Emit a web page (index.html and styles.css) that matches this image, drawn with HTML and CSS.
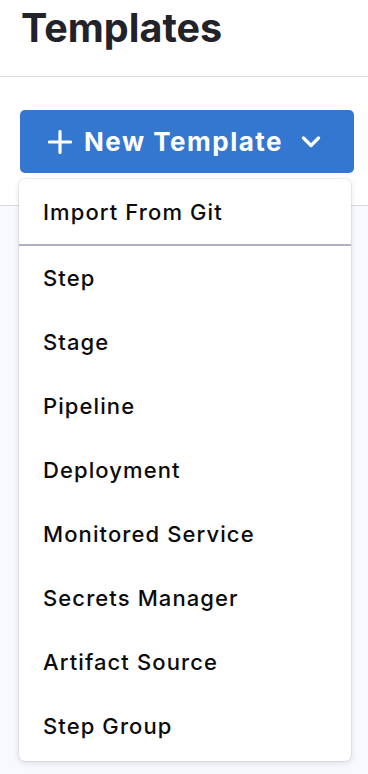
FILE: index.html
```html
<!DOCTYPE html>
<html>
<head>
<meta charset="utf-8">
<link rel="stylesheet" href="styles.css">
</head>
<body>
<header class="page-header">
  <h1 class="title">Templates</h1>
</header>
<section class="toolbar">
  <div class="dropdown">
    <button class="btn-new">
      <svg class="plus" width="24" height="24" viewBox="0 0 24 24"><path d="M12 1.5v21M1.5 12h21" stroke="#fff" stroke-width="3.2" stroke-linecap="round" fill="none"/></svg>
      <span>New Template</span>
      <svg class="chev" width="20" height="12" viewBox="0 0 20 12"><path d="M2.5 2l7.5 7.5L17.5 2" stroke="#fff" stroke-width="3.2" stroke-linecap="round" stroke-linejoin="round" fill="none"/></svg>
    </button>
    <div class="menu">
      <div class="menu-item first">Import From Git</div>
      <div class="sep"></div>
      <div class="menu-item">Step</div>
      <div class="menu-item">Stage</div>
      <div class="menu-item">Pipeline</div>
      <div class="menu-item">Deployment</div>
      <div class="menu-item">Monitored Service</div>
      <div class="menu-item">Secrets Manager</div>
      <div class="menu-item">Artifact Source</div>
      <div class="menu-item">Step Group</div>
    </div>
  </div>
</section>
<main class="content"></main>
</body>
</html>
```
FILE: styles.css
```css
* { box-sizing: border-box; }
html, body { margin: 0; padding: 0; }
body {
  width: 368px;
  height: 774px;
  overflow: hidden;
  background: #f8f9fc;
  font-family: Inter, "Noto Sans", sans-serif;
}
.page-header {
  height: 77px;
  background: #fff;
  border-bottom: 1.5px solid #d9dae6;
  padding: 0 0 0 21px;
}
.title {
  margin: 0;
  font-size: 39.5px;
  font-weight: 700;
  color: #22222a;
  line-height: 56px;
  letter-spacing: 0;
}
.toolbar {
  height: 129px;
  background: #fff;
  border-bottom: 1.5px solid #d9dae6;
  padding: 33px 14px 0 20px;
  position: relative;
}
.dropdown { position: relative; }
.btn-new {
  width: 334px;
  height: 63px;
  background: #3477d0;
  border: none;
  border-radius: 5px;
  color: #fff;
  font-family: Inter, "Noto Sans", sans-serif;
  font-size: 26px;
  font-weight: 700;
  letter-spacing: 1.5px;
  display: flex;
  align-items: center;
  padding: 0 0 0 28px;
  gap: 12px;
}
.btn-new .chev { margin-left: 6px; }
.menu {
  position: absolute;
  left: -1px;
  top: 69px;
  width: 332px;
  background: #fff;
  border-radius: 6px;
  box-shadow: 0 0 0 1px rgba(40,41,61,0.06), 0 2px 6px rgba(96,97,112,0.18);
  padding: 0 0 3px;
  z-index: 5;
}
.menu-item {
  height: 64px;
  display: flex;
  align-items: center;
  padding-left: 24px;
  font-size: 22px;
  font-weight: 450;
  letter-spacing: 1.1px;
  color: #0b0b0d;
}
.menu-item.first { height: 65px; }
.sep {
  height: 2px;
  background: #b0b1c4;
}
.content { height: 600px; }
```
